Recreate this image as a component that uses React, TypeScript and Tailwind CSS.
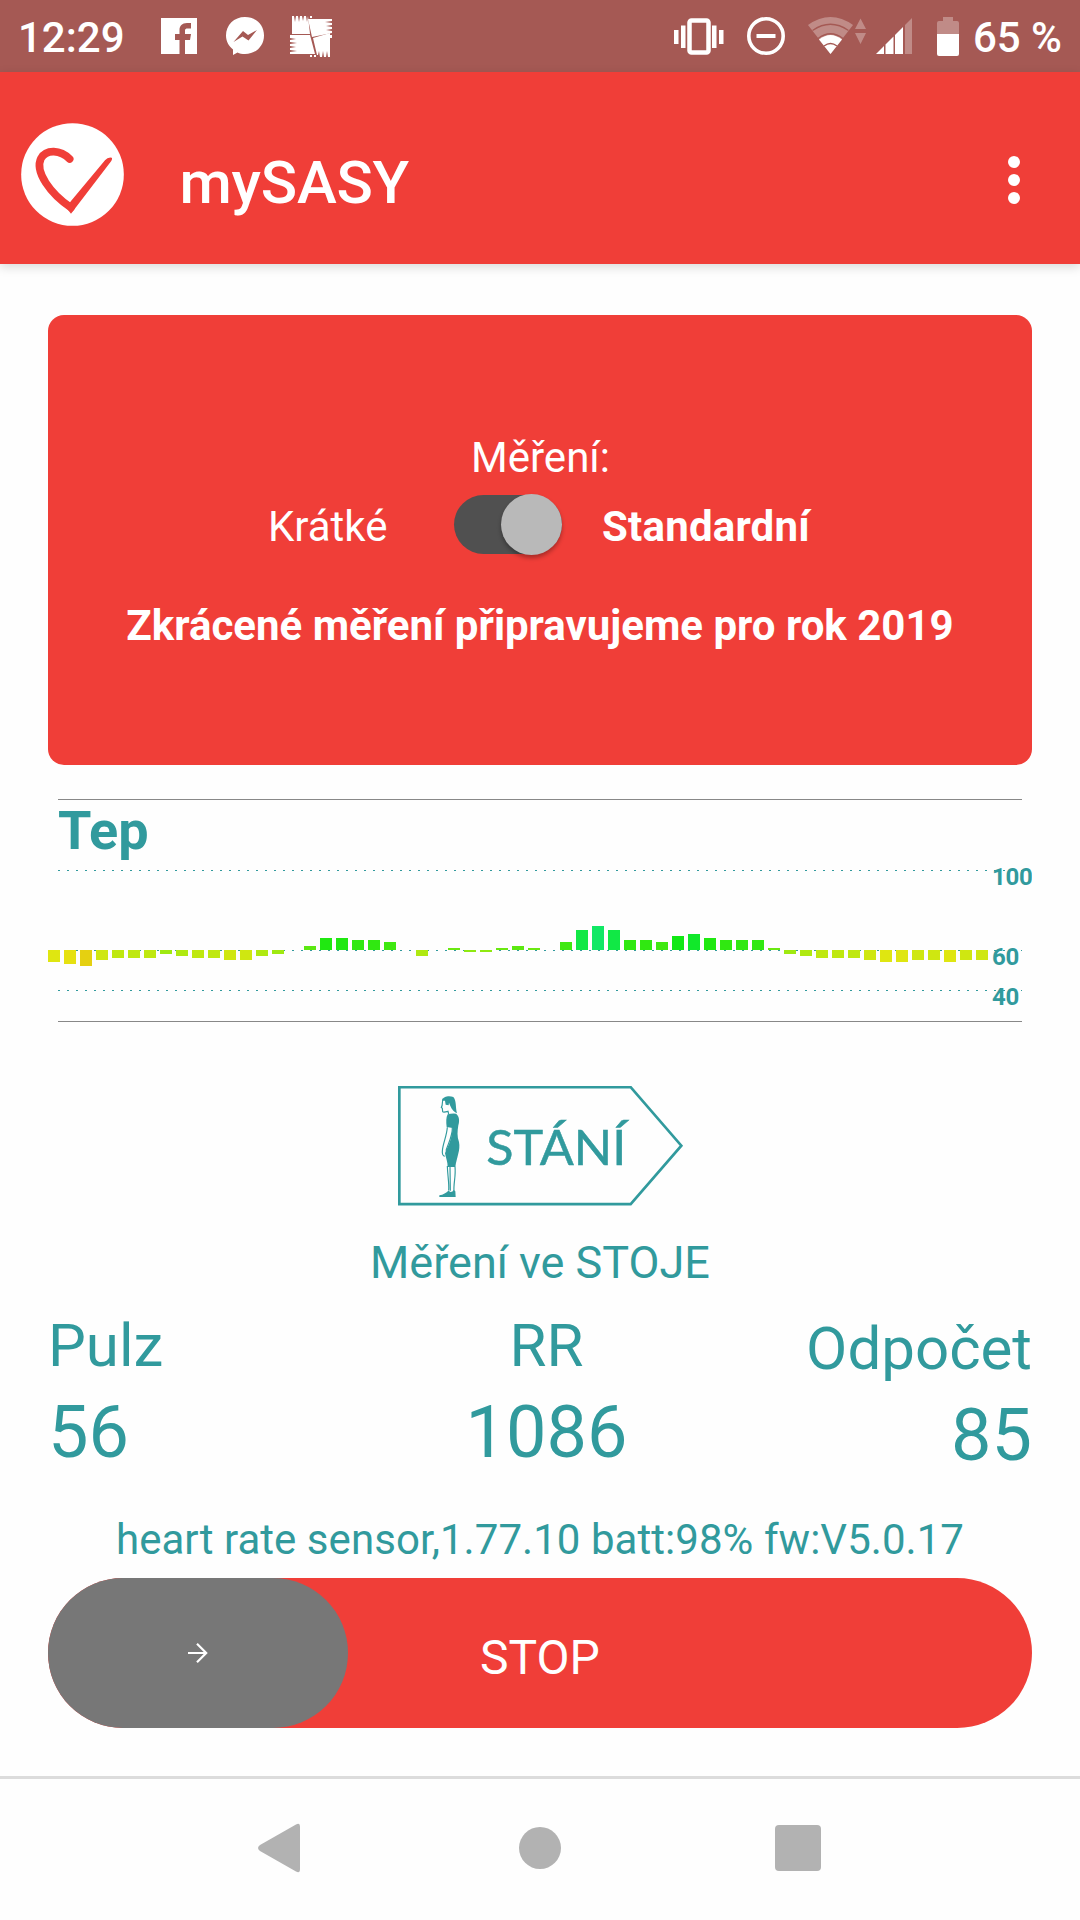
const BAR_VALUES = [
  -6, -7, -8, -5, -4, -4, -4, -2, -3, -4, -4, -5, -5, -3, -2, 0, 2, 6, 6, 5, 5, 4, 0, -3, 0, 1, -1, -1, 1, 2, 1, 0, 4,
  10, 12, 10, 5, 5, 4, 7, 8, 6, 5, 5, 5, 1, -2, -3, -4, -4, -4, -5, -6, -6, -5, -5, -6, -5, -5,
];

const BAR_COLORS: Record<string, string> = {
  "-8": "#e5d011",
  "-7": "#e6e111",
  "-6": "#dfe611",
  "-5": "#cfe711",
  "-4": "#bfe811",
  "-3": "#afe911",
  "-2": "#9fe911",
  "-1": "#8fe911",
  "1": "#6be811",
  "2": "#5ce811",
  "4": "#3fe811",
  "5": "#30e811",
  "6": "#20e811",
  "7": "#11e814",
  "8": "#11e82a",
  "10": "#11e845",
  "12": "#11e865",
};

function StatusBar() {
  return (
    <div className="flex h-[72px] items-center bg-[#a55954] pl-[18px] pr-[18px] text-white">
      <span className="w-[143px] pt-[4px] text-[42px] font-medium leading-[70px]">12:29</span>
      <svg className="h-9 w-9" viewBox="0 0 36 36">
        <path
          fill="#fff"
          fillRule="evenodd"
          d="M0 0H36V36H24V22H29L30 16H24V12.5C24 11 25 10.5 26.500 10.500H30V5H26C21 5 18.500 8 18.500 12V16H14V22H18.500V36H0Z"
        />
      </svg>
      <svg className="ml-[29px] h-[39px] w-[38px]" viewBox="0 0 38 39">
        <path
          fill="#fff"
          fillRule="evenodd"
          d="M19 0C30 0 38 8 38 18.500S30 37 19 37C16 37 13.500 36.500 11.500 35.500L7 38V32.500C2.500 29 0 24 0 18.500C0 8 8 0 19 0ZM7.500 25L17 14L22 18L31 13L22.500 23.500L16.500 19.500Z"
        />
      </svg>
      <svg className="ml-[26px] h-[42px] w-[42px]" viewBox="0 0 42 42">
        <path
          fill="#fff"
          d="M2 19V1H4L5 7 6 1H8L9 7 10 1H12L13 6 14 1H16L17 7 18 1L20 19ZM20 1H22V3H20Z"
        />
        <path
          fill="#fff"
          d="M18 4H42V6L35 7 42 8V10L36 11 42 12V14L36 15 42 16V18L22 22ZM40 20H42V23H40Z"
        />
        <path
          fill="#fff"
          d="M0 20H20L25 39H0V37L7 36 0 35V33L6 32 0 31V29L7 28 0 27V25L6 24 0 23Z"
        />
        <path
          fill="#fff"
          d="M23 23L40 18V42H38L37 36 36 42H34L33 36 32 42H30L29 36 28 40H27ZM20 40H22V42H20ZM24 40H26V42H24Z"
        />
      </svg>
      <div className="grow" />
      <svg className="h-[37px] w-[50px]" viewBox="0 0 50 37">
        <rect x="15.500" y="2.500" width="19" height="32" rx="2" fill="none" stroke="#fff" strokeWidth="4.500" />
        <path fill="#fff" d="M0 12H4.500V26H0ZM7 7.500H11.500V30H7ZM38 7.500H42.500V30H38ZM45 12H49.500V26H45Z" />
      </svg>
      <svg className="ml-[23px] h-[38px] w-[38px]" viewBox="0 0 38 38">
        <circle cx="19" cy="19" r="17.200" fill="none" stroke="#fff" strokeWidth="3.600" />
        <path fill="#fff" d="M9.500 17H28.500V21H9.500Z" />
      </svg>
      <svg className="ml-[22px] h-[38px] w-[60px]" viewBox="0 0 60 38">
        <path fill="#fff" fillOpacity=".3" d="M1 8Q23.500 -8 46 8L23.500 37Z" />
        <path fill="none" stroke="#a55954" strokeWidth="1.300" d="M5.500 13.500Q23.500 1 41.500 13.500" />
        <path fill="#fff" d="M12 22.500Q23.500 13.500 35 22.500L23.500 37Z" />
        <path fill="none" stroke="#a55954" strokeWidth="1.300" d="M11 21.500Q23.500 12 36 21.500M17 29Q23.500 24 30 29" />
        <path fill="#fff" fillOpacity=".3" d="M48 12L53.500 1.500L59 12ZM48 16H59L53.500 27Z" />
      </svg>
      <svg className="ml-[9px] h-9 w-9" viewBox="0 0 36 36">
        <path fill="#fff" d="M0 36L8 28V36ZM9.500 26.500L17.500 18.500V36H9.500ZM19 17L27 9V36H19Z" />
        <path fill="#fff" fillOpacity=".3" d="M29 7L36 0V36H29Z" />
      </svg>
      <svg className="ml-[25px] h-[39px] w-[22px]" viewBox="0 0 22 39">
        <path fill="#fff" fillOpacity=".3" d="M6 0H16V4H20Q22 4 22 6V17H0V6Q0 4 2 4H6Z" />
        <path fill="#fff" d="M0 17H22V37Q22 39 20 39H2Q0 39 0 37Z" />
      </svg>
      <span className="ml-[14px] whitespace-nowrap pt-[4px] text-[42px] font-medium leading-[70px]">65 %</span>
    </div>
  );
}

function AppBar() {
  return (
    <header className="relative flex h-48 items-center bg-[#f03e38] pl-[20.500px] pr-[60px] text-white shadow-[0_3px_10px_rgba(0,0,0,0.15)]">
      <svg className="mt-[13px] h-[103px] w-[103px]" viewBox="0 0 309 309">
        <circle cx="154.500" cy="154.500" r="154" fill="#fff" />
        <path
          d="M146 108C118 80 76 78 60 106C40 146 88 212 150 254"
          fill="none"
          stroke="#f03e38"
          strokeWidth="23"
          strokeLinecap="round"
        />
        <path fill="#f03e38" d="M150 272L136 254L150 234L252 112Q260 102 272 104Q276 106 268 118Z" />
      </svg>
      <h1 className="ml-[56px] grow pt-[29px] text-[60px] font-medium leading-[70px] tracking-[-0.200px]">mySASY</h1>
      <svg className="mt-6 h-12 w-3" viewBox="0 0 12 48" fill="#fff">
        <circle cx="6" cy="6" r="6" />
        <circle cx="6" cy="24" r="6" />
        <circle cx="6" cy="42" r="6" />
      </svg>
    </header>
  );
}

function MeasurementCard() {
  return (
    <section className="mx-12 mt-[51px] h-[450px] rounded-[16px] bg-[#f03e38] pt-[118px] text-[42px] leading-[50px] text-white">
      <p className="pl-px text-center">Měření:</p>
      <div className="mt-[11px] flex h-[61px] items-center pl-[220px]">
        <span className="w-[186px] pt-[4px]">Krátké</span>
        <div className="flex h-[59px] w-[108px] items-center justify-end rounded-full bg-[#505050]">
          <div className="h-[61px] w-[61px] shrink-0 rounded-full bg-[#b9b9b9] shadow-[0_3px_4px_rgba(0,0,0,0.3)]" />
        </div>
        <span className="ml-10 pt-[4px] font-bold tracking-[0.200px]">Standardní</span>
      </div>
      <p className="mt-[46px] text-center font-bold">Zkrácené měření připravujeme pro rok 2019</p>
    </section>
  );
}

function PulseChart() {
  return (
    <svg
      className="mx-12 mt-[30px] block h-[230px] w-[984px] shrink-0"
      viewBox="48 795 984 230"
      fontFamily="Roboto, sans-serif"
      fontWeight="700"
      fill="#319a9d"
    >
      <path d="M58 799.500H1022M58 1021.500H1022" stroke="#888" />
      <path d="M58 870.500H1022M58 950.500H1022M58 990.500H1022" stroke="#319a9d" strokeDasharray="2 7" />
      <text x="58" y="849" fontSize="54">
        Tep
      </text>
      {BAR_VALUES.map((value, i) => (
        <rect
          key={i}
          x={48 + i * 16}
          y={value > 0 ? 950 - value * 2 : 950}
          width="12"
          height={Math.abs(value) * 2}
          fill={BAR_COLORS[String(value)] ?? "none"}
        />
      ))}
      <g fontSize="24" letterSpacing="-0.3">
        <text x="992" y="885">100</text>
        <text x="992" y="965">60</text>
        <text x="992" y="1005">40</text>
      </g>
    </svg>
  );
}

function PositionBadge() {
  return (
    <svg className="ml-[398px] mt-[61px] block h-[120px] w-[286px] shrink-0" viewBox="54 48 858 360">
      <path d="M58 51.500H752L904 227L752 402.500H58Z" fill="none" stroke="#319a9d" strokeWidth="8" />
      <g fill="none" stroke="#319a9d" strokeWidth="3.500">
        <path d="M190 86C184 96 190 104 184 112L187 115L188 125Q190 128 204 124L206 132" />
        <path d="M202 172C200 200 188 222 187 244Q186 256 194 259M217 172C218 200 204 220 198 242" />
        <path d="M202 288C203 320 208 340 206 362M210 290L211 362M225 290C228 320 220 340 222 364" />
      </g>
      <g fill="#319a9d">
        <path d="M186 92C190 78 208 77 220 81C230 92 226 112 231 130C224 128 216 120 210 106L207 98L206 106L197 104L195 92Z" />
        <path d="M203 133Q214 130 228 131C238 138 239 152 235 166C232 184 231 200 237 216C242 240 230 262 226 291H203C203 276 198 264 195 250C200 234 214 218 218 174L200 171C198 156 198 142 203 133Z" />
        <path d="M205 362L212 366Q218 366 221 360L226 364L227 381H178V376Q196 372 205 362Z" />
      </g>
      <text
        x="319"
        y="286"
        fill="#319a9d"
        stroke="#319a9d"
        strokeWidth="1.500"
        fontFamily="Lato, sans-serif"
        fontSize="145"
        textLength="420"
        lengthAdjust="spacingAndGlyphs"
      >
        STÁNÍ
      </text>
    </svg>
  );
}

function Stat({ label, value, className }: { label: string; value: string; className: string }) {
  return (
    <div className={className}>
      <div className="text-[60px] leading-[71px]">{label}</div>
      <div className="mt-[10px] text-[72px] leading-[84px]">{value}</div>
    </div>
  );
}

function StopSlider() {
  return (
    <div className="relative mx-12 mt-[13px] flex h-[150px] shrink-0 items-center justify-center rounded-full bg-[#f03e38]">
      <span className="pt-[9px] text-[48px] leading-[56px] text-white">STOP</span>
      <div className="absolute left-0 top-0 flex h-[150px] w-[300px] items-center justify-center rounded-full bg-[#777]">
        <svg className="h-5 w-5" viewBox="0 0 20 20" fill="none" stroke="#fff" strokeWidth="2.200">
          <path d="M0 10H18.500M9 .8L18.200 10L9 19.200" />
        </svg>
      </div>
    </div>
  );
}

function NavigationBar() {
  return (
    <nav className="mt-[48px] flex h-36 items-center border-t-[3px] border-[#dcdcdc] pb-[4px] pl-[258px]">
      <svg className="h-[50px] w-[42px]" viewBox="0 0 42 50" fill="#b2b2b2">
        <path d="M38 1.500Q42 -1 42 4V46Q42 51 38 48.500L2 28Q-2 25 2 22Z" />
      </svg>
      <div className="ml-[219px] h-[42px] w-[42px] rounded-full bg-[#b2b2b2]" />
      <div className="ml-[214px] h-[46px] w-[46px] rounded-[4px] bg-[#b2b2b2]" />
    </nav>
  );
}

export default function App() {
  return (
    <div className="flex h-[1920px] w-[1080px] flex-col overflow-hidden bg-[#fefefe] font-[Roboto,sans-serif] text-[#319a9d]">
      <StatusBar />
      <AppBar />
      <MeasurementCard />
      <PulseChart />
      <PositionBadge />
      <p className="mt-[30px] text-center text-[45px] leading-[54px]">Měření ve STOJE</p>
      <div className="mx-12 mt-[20px] grid h-[167px] grid-cols-3">
        <Stat label="Pulz" value="56" className="" />
        <Stat label="RR" value="1086" className="pl-[13px] text-center" />
        <Stat label="Odpočet" value="85" className="pt-[3px] text-right" />
      </div>
      <p className="mt-[38px] text-center text-[42px] leading-[50px] tracking-[0.050px]">
        heart rate sensor,1.77.10 batt:98% fw:V5.0.17
      </p>
      <StopSlider />
      <NavigationBar />
    </div>
  );
}
